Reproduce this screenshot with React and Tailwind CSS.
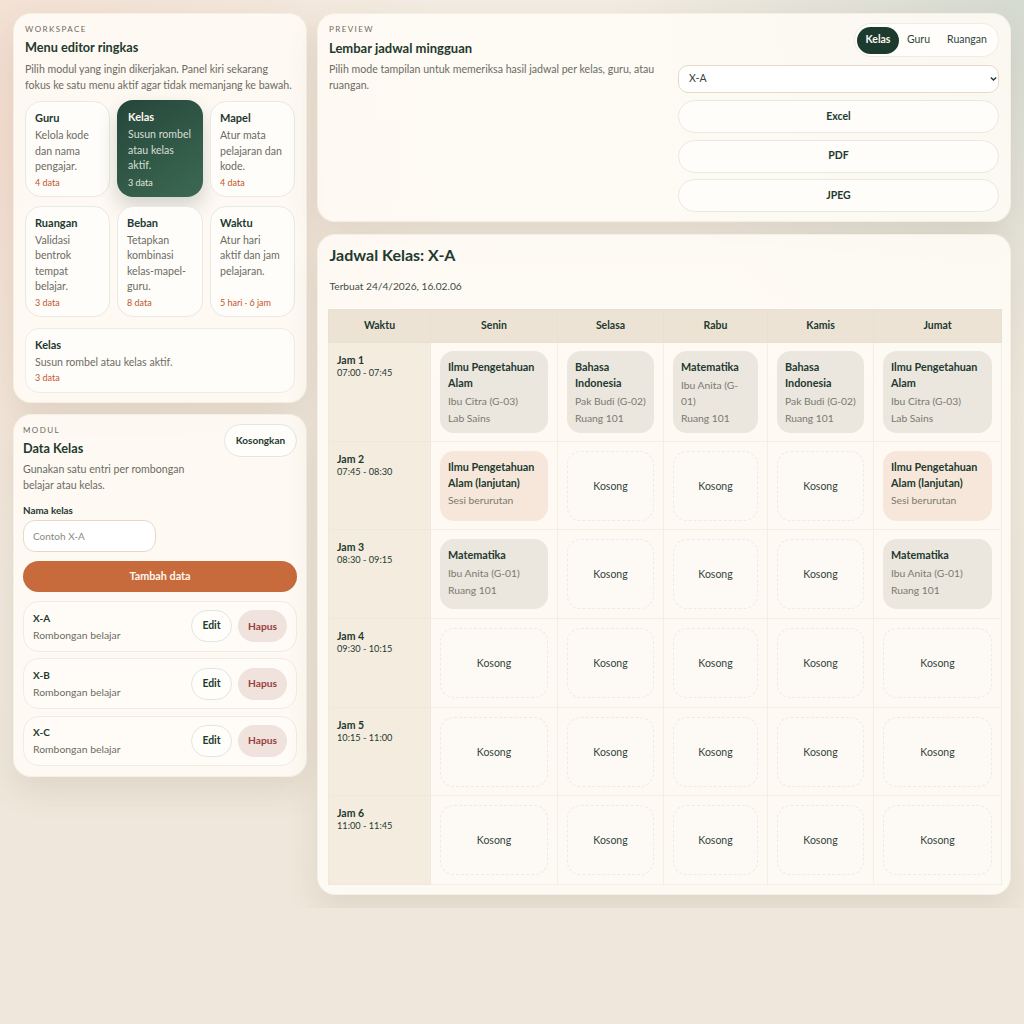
const menuItems = [
  { title: 'Guru', desc: 'Kelola kode dan nama pengajar.', meta: '4 data' },
  { title: 'Kelas', desc: 'Susun rombel atau kelas aktif.', meta: '3 data', active: true },
  { title: 'Mapel', desc: 'Atur mata pelajaran dan kode.', meta: '4 data' },
  { title: 'Ruangan', desc: 'Validasi bentrok tempat belajar.', meta: '3 data' },
  { title: 'Beban', desc: 'Tetapkan kombinasi kelas-mapel-guru.', meta: '8 data' },
  { title: 'Waktu', desc: 'Atur hari aktif dan jam pelajaran.', meta: '5 hari · 6 jam' },
]

const days = ['Senin', 'Selasa', 'Rabu', 'Kamis', 'Jumat']
const colWidths = ['w-[127px]', 'w-[106px]', 'w-[104px]', 'w-[106px]', 'w-[128px]']

const ipa = { title: 'Ilmu Pengetahuan Alam', lines: ['Ibu Citra (G-03)', 'Lab Sains'], tone: 'a' }
const bi = { title: 'Bahasa Indonesia', lines: ['Pak Budi (G-02)', 'Ruang 101'], tone: 'a' }
const mtk = { title: 'Matematika', lines: ['Ibu Anita (G-01)', 'Ruang 101'], tone: 'a' }
const lanjut = { title: 'Ilmu Pengetahuan Alam (lanjutan)', lines: ['Sesi berurutan'], tone: 'b' }

const rows = [
  { name: 'Jam 1', time: '07:00 - 07:45', height: 'h-[99px]', cells: [ipa, bi, mtk, bi, ipa] },
  { name: 'Jam 2', time: '07:45 - 08:30', height: 'h-[88px]', cells: [lanjut, null, null, null, lanjut] },
  { name: 'Jam 3', time: '08:30 - 09:15', height: 'h-[89px]', cells: [mtk, null, null, null, mtk] },
  { name: 'Jam 4', time: '09:30 - 10:15', height: 'h-[89px]', cells: [null, null, null, null, null] },
  { name: 'Jam 5', time: '10:15 - 11:00', height: 'h-[88px]', cells: [null, null, null, null, null] },
  { name: 'Jam 6', time: '11:00 - 11:45', height: 'h-[89px]', cells: [null, null, null, null, null] },
]

const panel = 'rounded-[18px] border border-[#f5efe5] bg-[rgba(255,252,246,0.88)] shadow-[0_14px_32px_rgba(100,80,50,0.12)]'

const MenuCard = ({ title, desc, meta, active }) => (
  <div
    className={
      active
        ? '-mt-[1px] flex flex-col rounded-[16px] bg-[linear-gradient(145deg,#25463a,#3c6953)] px-[11px] pt-[9px] pb-[8px] shadow-[0_10px_20px_rgba(40,60,50,0.2)]'
        : 'flex flex-col rounded-[16px] border border-[#e9e8e2] bg-[#fffdfa] pt-[8px] pr-[11px] pb-[7px] pl-[9px]'
    }
  >
    <div className={`text-[11px] leading-[16px] font-bold ${active ? 'text-[#fdf8ef]' : 'text-[#22392f]'}`}>{title}</div>
    <div className={`mt-[2px] text-[10.6px] leading-[15.5px] ${active ? 'text-[#d6dfd6]' : 'text-[#6b6c62]'}`}>{desc}</div>
    <div className={`mt-auto pt-[1px] text-[9px] leading-[13px] ${active ? 'text-[#e4e8df]' : 'text-[#c2562a]'}`}>{meta}</div>
  </div>
)

const ListRow = ({ name }) => (
  <div className="flex h-[50.5px] items-center justify-between rounded-[16px] border border-[#f1ece3] bg-[#fffcf8] px-[9px]">
    <div>
      <div className="text-[10px] leading-[16px] font-bold text-[#22392f]">{name}</div>
      <div className="mt-[1px] text-[10.4px] leading-[16px] text-[#6b6c62]">Rombongan belajar</div>
    </div>
    <div className="flex gap-[6px]">
      <button className="h-[32px] w-[41px] rounded-full border border-[#e3e5e0] bg-[#fffefb] text-[10.4px] font-bold text-[#22392f]">Edit</button>
      <button className="h-[32px] w-[49px] rounded-full bg-[#f0e2dd] text-[10.2px] font-bold text-[#97403a]">Hapus</button>
    </div>
  </div>
)

const SlotCell = ({ item }) => {
  if (!item) {
    return (
      <div className="flex h-[70px] items-center justify-center rounded-[14px] border border-dashed border-[#ecebe4] bg-[#fdfaf5] pt-[2px] text-[10.5px] text-[#33443c]">
        Kosong
      </div>
    )
  }
  const isSoft = item.tone === 'b'
  return (
    <div className={`min-h-[70px] rounded-[14px] px-[8px] pt-[8px] pb-[7px] ${isSoft ? 'bg-[#f6e7da]' : 'bg-[#ebe6de]'}`}>
      <div className="text-[10.8px] leading-[16px] font-bold text-[#22392f]">{item.title}</div>
      {item.lines.map((line) => (
        <div key={line} className="mt-[1.5px] text-[10.3px] leading-[16px] text-[#7a7a70]">{line}</div>
      ))}
    </div>
  )
}

export default function App() {
  return (
    <div className="font-['Lato',sans-serif]">
      <div className="flex h-[908px] items-start gap-[10px] overflow-hidden bg-[radial-gradient(circle_at_0%_15%,#f3ddcf_0,transparent_35%),radial-gradient(circle_at_100%_0%,#d5dad0_0,transparent_30%),linear-gradient(180deg,#f3ece2,#efe7db)] px-[13px] pt-[13px]">
        <div className="flex w-[294px] shrink-0 flex-col gap-[11px]">
          <section className={`${panel} h-[390px] px-[11px] pt-[9px]`}>
            <div className="text-[8px] leading-[12px] tracking-[0.18em] text-[#6b6c62]">WORKSPACE</div>
            <h2 className="mt-[2px] text-[12.7px] leading-[20px] font-bold text-[#22392f]">Menu editor ringkas</h2>
            <p className="mt-[5px] text-[10.6px] leading-[15.5px] text-[#6b6c62]">
              Pilih modul yang ingin dikerjakan. Panel kiri sekarang fokus ke satu menu aktif agar tidak memanjang ke bawah.
            </p>
            <div className="mt-[8px] grid grid-cols-[85px_86px_85px] gap-x-[7px] gap-y-[9px]">
              {menuItems.map((item) => (
                <MenuCard key={item.title} {...item} />
              ))}
            </div>
            <div className="mt-[11px] rounded-[14px] border border-[#f1ece3] bg-[#fffdfa] px-[9px] pt-[8px] pb-[7px]">
              <div className="text-[11px] leading-[16px] font-bold text-[#22392f]">Kelas</div>
              <div className="mt-[1px] text-[10.6px] leading-[16px] text-[#6b6c62]">Susun rombel atau kelas aktif.</div>
              <div className="mt-[1px] text-[9px] leading-[14px] text-[#c2562a]">3 data</div>
            </div>
          </section>

          <section className={`${panel} h-[363px] px-[9px] pt-[9px]`}>
            <div className="flex items-start justify-between">
              <div className="w-[176px]">
                <div className="text-[8px] leading-[12px] tracking-[0.18em] text-[#6b6c62]">MODUL</div>
                <h2 className="mt-[2px] text-[12.7px] leading-[20px] font-bold text-[#22392f]">Data Kelas</h2>
                <p className="mt-[3px] text-[10.6px] leading-[16px] text-[#6b6c62]">
                  Gunakan satu entri per rombongan belajar atau kelas.
                </p>
              </div>
              <button className="h-[33px] w-[73px] rounded-full border border-[#e3e5e0] bg-[#fffefb] text-[10px] font-bold text-[#22392f]">Kosongkan</button>
            </div>
            <label className="mt-[9px] block text-[9.8px] leading-[16px] font-bold text-[#22392f]">Nama kelas</label>
            <input
              placeholder="Contoh X-A"
              className="mt-[2px] block h-[32px] w-[133px] rounded-[12px] border border-[#e8d9c6] bg-white px-[9px] text-[10px] text-[#22392f] placeholder:text-[#8b8a80]"
            />
            <button className="mt-[8.5px] h-[31px] w-full rounded-full bg-[#c76a3c] text-[10.8px] font-bold text-[#fff8ef]">Tambah data</button>
            <div className="mt-[9.5px] flex flex-col gap-[6.8px]">
              <ListRow name="X-A" />
              <ListRow name="X-B" />
              <ListRow name="X-C" />
            </div>
          </section>
        </div>

        <div className="flex w-[694px] shrink-0 flex-col gap-[12px]">
          <section className={`${panel} flex h-[209px] gap-[13px] px-[11px] pt-[9px]`}>
            <div className="w-[336px] shrink-0">
              <div className="text-[8px] leading-[12px] tracking-[0.18em] text-[#6b6c62]">PREVIEW</div>
              <h2 className="mt-[3px] text-[13px] leading-[20px] font-bold text-[#22392f]">Lembar jadwal mingguan</h2>
              <p className="mt-[4px] text-[10.6px] leading-[15.5px] text-[#6b6c62]">
                Pilih mode tampilan untuk memeriksa hasil jadwal per kelas, guru, atau ruangan.
              </p>
            </div>
            <div className="flex flex-1 flex-col">
              <div className="flex justify-end">
                <div className="flex h-[34px] items-center rounded-full border border-[#efece5] bg-[#fffefb] px-[2px] text-[10.5px]">
                  <span className="flex h-[27px] w-[42px] items-center justify-center rounded-full bg-[#1d3a2f] font-bold text-[#fdf8ef]">Kelas</span>
                  <span className="flex h-[27px] w-[39px] items-center justify-center text-[#33443c]">Guru</span>
                  <span className="flex h-[27px] w-[58px] items-center justify-center text-[#33443c]">Ruangan</span>
                </div>
              </div>
              <div className="relative mt-[8px]">
                <select className="block h-[28px] w-full appearance-none rounded-[10px] border border-[#e8d9c6] bg-white px-[10px] text-[10.5px] text-[#33443c]">
                  <option>X-A</option>
                </select>
                <svg viewBox="0 0 8 6" className="pointer-events-none absolute top-[11px] right-[2px] h-[6px] w-[7px]" fill="none" stroke="#22392f" strokeWidth="1.6">
                  <path d="M1 1.2 L4 4.2 L7 1.2" />
                </svg>
              </div>
              <div className="mt-[7px] flex flex-col gap-[6.7px]">
                {['Excel', 'PDF', 'JPEG'].map((label) => (
                  <button key={label} className="h-[33px] w-full rounded-full border border-[#e9e8e2] bg-[#fffdf9] text-[10.5px] font-bold text-[#22392f]">{label}</button>
                ))}
              </div>
            </div>
          </section>

          <section className={`${panel} h-[661px] px-[11.5px] pt-[8px]`}>
            <h1 className="text-[16px] leading-[24px] font-bold text-[#22392f]">Jadwal Kelas: X-A</h1>
            <div className="mt-[10.5px] text-[10.2px] leading-[16px] text-[#3f4d45]">Terbuat 24/4/2026, 16.02.06</div>
            <table className="mt-[15.5px] -ml-[1.5px] w-[673px] table-fixed border-collapse">
              <thead>
                <tr className="h-[33px] bg-[#ece3d5]">
                  <th className="w-[102px] border border-[#e7e0d3] text-[10.5px] font-bold text-[#22392f]">Waktu</th>
                  {days.map((day, i) => (
                    <th key={day} className={`${colWidths[i]} border border-[#e7e0d3] text-[10.5px] font-bold text-[#22392f]`}>{day}</th>
                  ))}
                </tr>
              </thead>
              <tbody>
                {rows.map((row) => (
                  <tr key={row.name} className={row.height}>
                    <td className="border border-[#efe9dd] bg-[#f4ecdf] px-[8px] pt-[10px] align-top">
                      <div className="text-[10.5px] leading-[14px] font-bold text-[#22392f]">{row.name}</div>
                      <div className="text-[9.2px] leading-[12px] text-[#22392f]">{row.time}</div>
                    </td>
                    {row.cells.map((item, i) => (
                      <td key={i} className="border border-[#f4efe5] px-[9px] py-[8px] align-middle">
                        <SlotCell item={item} />
                      </td>
                    ))}
                  </tr>
                ))}
              </tbody>
            </table>
          </section>
        </div>
      </div>
      <div className="h-[116px] bg-[#efe7db]" />
    </div>
  )
}
